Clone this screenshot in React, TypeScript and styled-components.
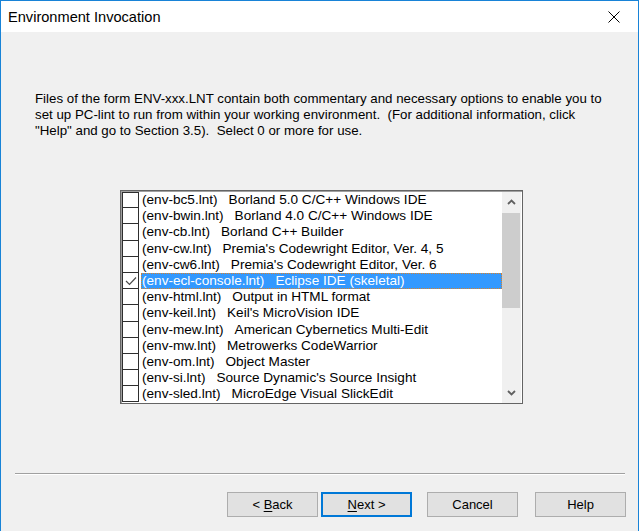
import styled, { createGlobalStyle } from 'styled-components';

const GlobalStyle = createGlobalStyle`
  html, body {
    margin: 0;
    padding: 0;
    background: #ffffff;
  }
  * {
    box-sizing: border-box;
  }
`;

const Window = styled.div`
  width: 639px;
  height: 531px;
  border: 1px solid #1883d7;
  border-bottom: none;
  background: #f0f0f0;
  display: flex;
  flex-direction: column;
  font-family: "Liberation Sans", Arial, sans-serif;
  color: #000;
  overflow: hidden;
`;

const TitleBar = styled.div`
  height: 31px;
  background: #ffffff;
  display: flex;
  align-items: center;
  padding-left: 7px;
  font-size: 14.6px;
  flex-shrink: 0;
`;

const CloseBox = styled.div`
  margin-left: auto;
  width: 44px;
  height: 31px;
  display: flex;
  align-items: center;
  justify-content: center;
  margin-right: 2px;
`;

const Body = styled.div`
  flex: 1;
  display: flex;
  flex-direction: column;
`;

const Description = styled.p`
  margin: 59px 0 0 34px;
  font-size: 13.3px;
  line-height: 16px;
  white-space: nowrap;
`;

const ListBox = styled.div`
  margin: 51px 0 0 119px;
  width: 403px;
  height: 214px;
  background: #ffffff;
  border: 1px solid #646464;
  box-shadow: inset 1px 1px 0 #a0a0a0;
  padding: 1px 1px 0 1px;
  display: flex;
  overflow: hidden;
`;

const Items = styled.div`
  flex: 1;
  display: flex;
  flex-direction: column;
  overflow: hidden;
`;

const Row = styled.div`
  display: flex;
  height: 16.2px;
  flex-shrink: 0;
  font-size: 13.6px;
  line-height: 16px;
  white-space: pre;
`;

const Check = styled.div<{ $first: boolean }>`
  width: 17px;
  flex-shrink: 0;
  border: 1px solid #2e2e2e;
  border-top: ${(p) => (p.$first ? '1px solid #2e2e2e' : 'none')};
  background: #ffffff;
  display: flex;
  align-items: center;
  justify-content: center;
`;

const Label = styled.div<{ $selected: boolean }>`
  flex: 1;
  margin-left: 2px;
  padding-left: 1px;
  background: ${(p) => (p.$selected ? '#3399ff' : 'transparent')};
  color: ${(p) => (p.$selected ? '#ffffff' : '#000000')};
  outline: ${(p) => (p.$selected ? '1px dotted #d9822b' : 'none')};
  outline-offset: -1px;
`;

const Desc = styled.span`
  margin-left: 11px;
`;

const ScrollBar = styled.div`
  width: 19px;
  flex-shrink: 0;
  background: #f0f0f0;
  display: flex;
  flex-direction: column;
`;

const ScrollButton = styled.div`
  height: 20px;
  display: flex;
  align-items: center;
  justify-content: center;
  flex-shrink: 0;
`;

const Track = styled.div`
  flex: 1;
  display: flex;
  flex-direction: column;
`;

const Thumb = styled.div`
  height: 95px;
  margin: 1px 1px 0 0;
  background: #cdcdcd;
`;

const Separator = styled.div`
  margin: 69px 0 0 14px;
  width: 610px;
  height: 2px;
  border-top: 1px solid #a0a0a0;
  border-bottom: 1px solid #ffffff;
`;

const ButtonRow = styled.div`
  margin-top: 17px;
  display: flex;
  justify-content: flex-end;
  padding-right: 12px;
`;

const Button = styled.button<{ $default?: boolean; $gap: number }>`
  width: 91px;
  height: 25px;
  margin-left: ${(p) => p.$gap}px;
  padding: 0;
  background: #e1e1e1;
  border: ${(p) => (p.$default ? '2px solid #0078d7' : '1px solid #adadad')};
  font-family: "Liberation Sans", Arial, sans-serif;
  font-size: 13px;
  color: #000;
  u {
    text-decoration: underline;
    text-underline-offset: 2px;
  }
`;

const items: [string, string][] = [
  ['(env-bc5.lnt)', 'Borland 5.0 C/C++ Windows IDE'],
  ['(env-bwin.lnt)', 'Borland 4.0 C/C++ Windows IDE'],
  ['(env-cb.lnt)', 'Borland C++ Builder'],
  ['(env-cw.lnt)', "Premia's Codewright Editor, Ver. 4, 5"],
  ['(env-cw6.lnt)', "Premia's Codewright Editor, Ver. 6"],
  ['(env-ecl-console.lnt)', 'Eclipse IDE (skeletal)'],
  ['(env-html.lnt)', 'Output in HTML format'],
  ['(env-keil.lnt)', "Keil's MicroVision IDE"],
  ['(env-mew.lnt)', 'American Cybernetics Multi-Edit'],
  ['(env-mw.lnt)', 'Metrowerks CodeWarrior'],
  ['(env-om.lnt)', 'Object Master'],
  ['(env-si.lnt)', "Source Dynamic's Source Insight"],
  ['(env-sled.lnt)', 'MicroEdge Visual SlickEdit'],
];

const SELECTED = 5;

function Chevron({ up }: { up: boolean }) {
  return (
    <svg width="9" height="6" viewBox="0 0 9 6">
      <path
        d={up ? 'M1 5 L4.5 1.5 L8 5' : 'M1 1 L4.5 4.5 L8 1'}
        fill="none"
        stroke="#606060"
        strokeWidth="1.8"
      />
    </svg>
  );
}

export default function App() {
  return (
    <>
      <GlobalStyle />
      <Window>
        <TitleBar>
          Environment Invocation
          <CloseBox>
            <svg width="12" height="12" viewBox="0 0 12 12">
              <path d="M0.5 0.5 L11.5 11.5 M11.5 0.5 L0.5 11.5" stroke="#000" strokeWidth="1" />
            </svg>
          </CloseBox>
        </TitleBar>
        <Body>
          <Description>
            Files of the form ENV-xxx.LNT contain both commentary and necessary options to enable you to
            <br />
            set up PC-lint to run from within your working environment.&nbsp; (For additional information, click
            <br />
            "Help" and go to Section 3.5).&nbsp; Select 0 or more for use.
          </Description>
          <ListBox>
            <Items>
              {items.map(([file, desc], i) => (
                <Row key={file}>
                  <Check $first={i === 0}>
                    {i === SELECTED && (
                      <svg width="12" height="10" viewBox="0 0 12 10">
                        <path d="M1 5 L4.5 8.5 L11 1.5" fill="none" stroke="#4a4a4a" strokeWidth="1.2" />
                      </svg>
                    )}
                  </Check>
                  <Label $selected={i === SELECTED}>
                    {file}
                    <Desc>{desc}</Desc>
                  </Label>
                </Row>
              ))}
            </Items>
            <ScrollBar>
              <ScrollButton>
                <Chevron up />
              </ScrollButton>
              <Track>
                <Thumb />
              </Track>
              <ScrollButton>
                <Chevron up={false} />
              </ScrollButton>
            </ScrollBar>
          </ListBox>
          <Separator />
          <ButtonRow>
            <Button $gap={0}>
              &lt; <u>B</u>ack
            </Button>
            <Button $gap={3} $default>
              <u>N</u>ext &gt;
            </Button>
            <Button $gap={15}>Cancel</Button>
            <Button $gap={17}>Help</Button>
          </ButtonRow>
        </Body>
      </Window>
    </>
  );
}
